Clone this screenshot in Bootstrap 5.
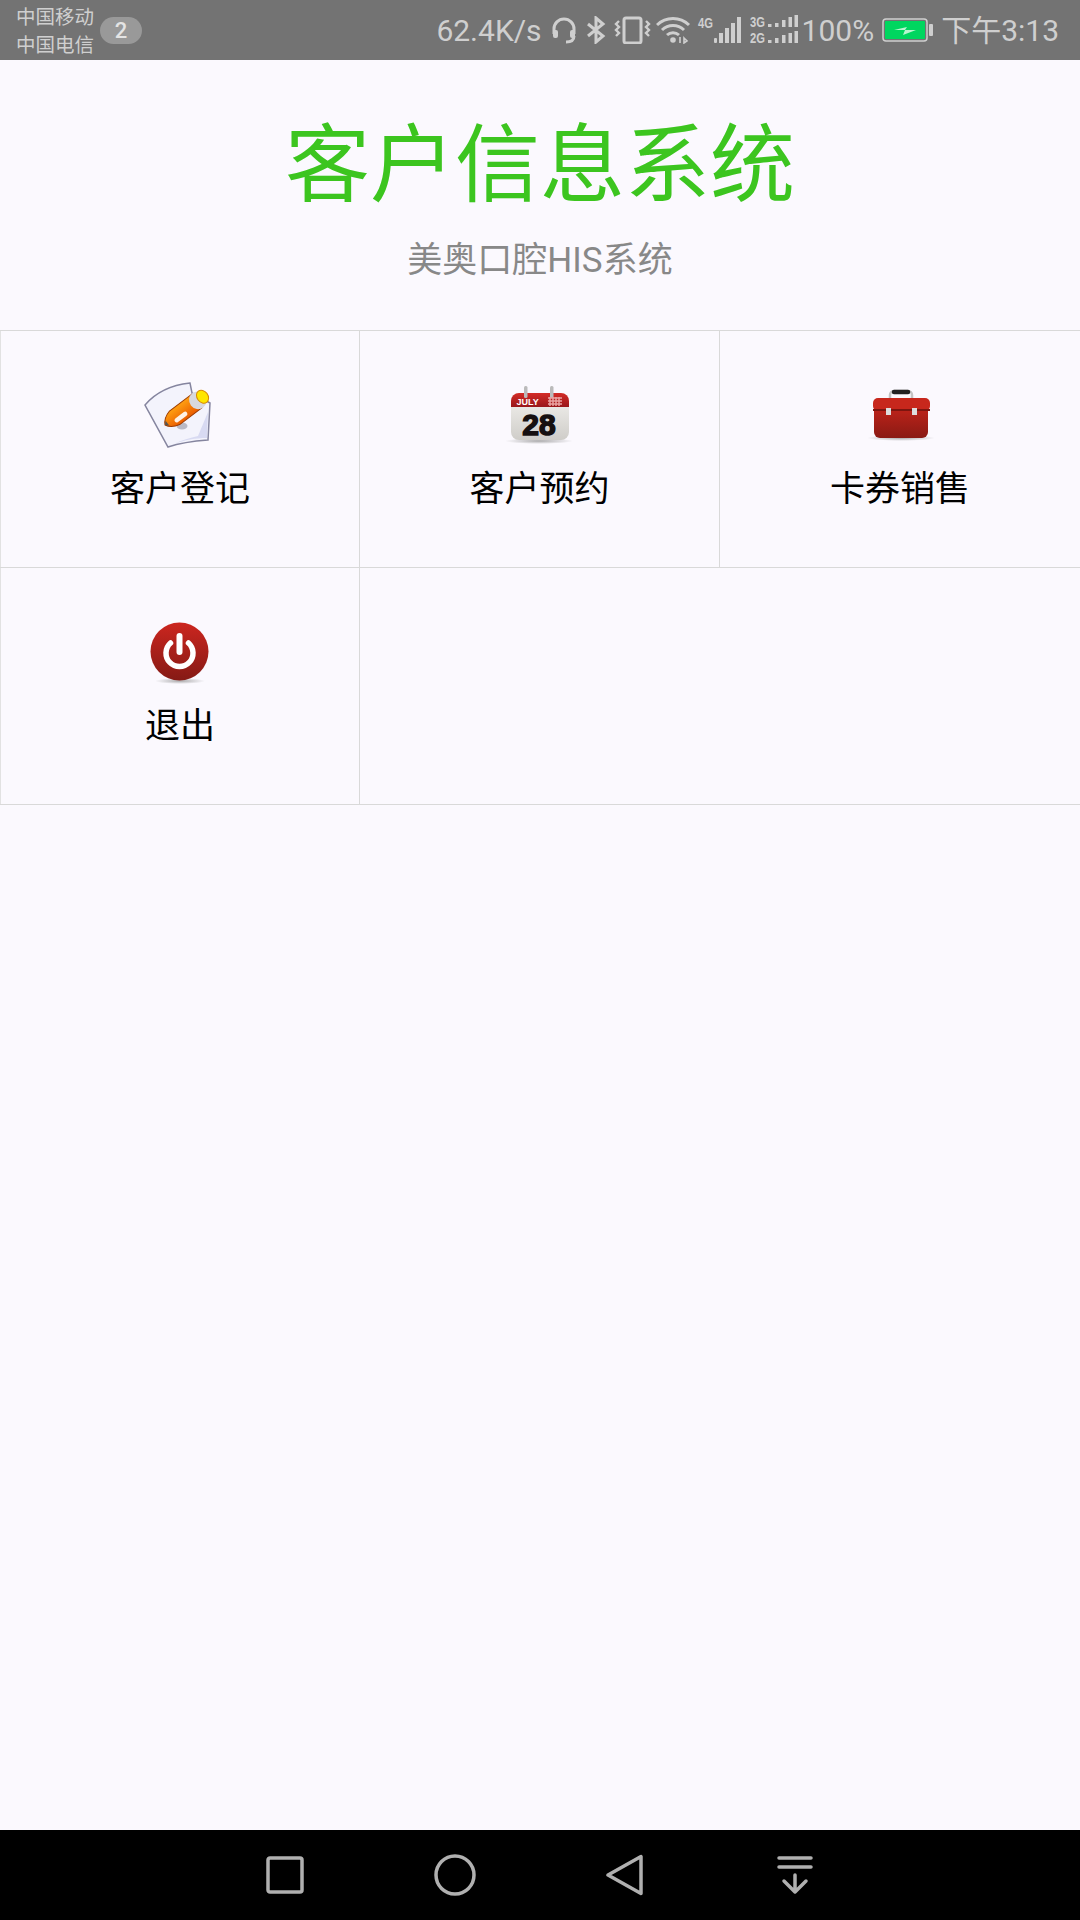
<!DOCTYPE html>
<html lang="zh-CN">
<head>
    <meta charset="UTF-8">
    <meta name="viewport" content="width=device-width, initial-scale=1.0">
    <title>客户信息系统</title>
    <link href="https://cdn.jsdelivr.net/npm/bootstrap@5.3.0/dist/css/bootstrap.min.css" rel="stylesheet">
    <style>
        body { background: #fbf9fe; font-family: Roboto, "Noto Sans CJK SC", sans-serif; }
        .app-screen { height: 1920px; }
        .status-strip { height: 60px; background: #737373; color: #cfcfcf; }
        .carrier-names { margin-left: 16px; padding-top: 4px; font-size: 19.5px; line-height: 28px; width: 80px; }
        .sim-count { margin-left: 4px; margin-top: 1px; width: 42px; height: 27px; border-radius: 14px; background: #999; color: #e4e4e4; font-size: 22px; font-weight: 500; line-height: 27px; }
        .status-right { padding-right: 21px; font-size: 30px; }
        .status-right svg { display: block; flex: none; }
        .page-head { height: 270px; padding-top: 40px; }
        .page-title { color: #3cc51f; font-size: 85px; font-weight: 400; line-height: 132px; margin: 0; }
        .page-sub { color: #888; font-size: 35px; line-height: 50px; margin: 4px 0 0; }
        .menu-grid { border-top: 1px solid #d9d9d9; border-bottom: 1px solid #d9d9d9; }
        .menu-cell { height: 236px; padding-top: 49px; border-left: 1px solid #e2e2e2; border-right: 1px solid #d9d9d9; color: #000; font-size: 35px; line-height: 48px; text-decoration: none; }
        .menu-row + .menu-row { border-top: 1px solid #d9d9d9; }
        .menu-cell svg { display: block; margin: 0 auto 14px; }
        .menu-cell + .menu-cell { border-left: 0; }
        .menu-cell + .menu-cell + .menu-cell { border-right: 0; }
        .nav-strip { height: 90px; background: #000; }
        .nav-slot { width: 170px; }
    </style>
</head>
<body>
<div class="app-screen d-flex flex-column">
    <!-- status bar -->
    <div class="status-strip d-flex align-items-center">
        <div class="carrier-names"><div>中国移动</div><div>中国电信</div></div>
        <div class="sim-count text-center">2</div>
        <div class="status-right ms-auto d-flex align-items-center">
            <span>62.4K/s</span>
            <svg class="ms-2" width="28" height="28" viewBox="0 0 28 28" fill="none" stroke="#cfcfcf" stroke-width="3"><path d="M4 18V13a10 10 0 0 1 20 0v5"/><rect x="3" y="14" width="5" height="8" rx="2" fill="#cfcfcf" stroke="none"/><rect x="20" y="14" width="5" height="8" rx="2" fill="#cfcfcf" stroke="none"/><path d="M24 20c0 4-3 6-8 6"/></svg>
            <svg class="ms-2" width="20" height="28" viewBox="0 0 20 28" fill="none" stroke="#cfcfcf" stroke-width="3"><path d="M2 8l15 12-7 6V2l7 6L2 20"/></svg>
            <svg class="ms-2" width="38" height="28" viewBox="0 0 38 28" fill="none" stroke="#cfcfcf" stroke-width="3"><rect x="10" y="2" width="17" height="25" rx="2"/><path d="M5 5l-3 3 3 3-3 3 3 3-3 3M32 5l3 3-3 3 3 3-3 3 3 3" stroke-width="2.4"/></svg>
            <svg class="ms-1" width="36" height="28" viewBox="0 0 36 28" fill="none" stroke="#cfcfcf" stroke-width="3"><path d="M1 9a23 23 0 0 1 32 0M6 14a16 16 0 0 1 22 0M11 19a9 9 0 0 1 12 0"/><circle cx="17" cy="24" r="2.8" fill="#cfcfcf" stroke="none"/><path d="M24 21v6M28 22l3 3-3 2z" stroke-width="1.6"/></svg>
            <svg class="ms-1" width="46" height="32" viewBox="0 -2 46 32"><text x="2" y="12" textLength="15" lengthAdjust="spacingAndGlyphs" font-family="'Liberation Sans',sans-serif" font-size="15" font-weight="700" fill="#cfcfcf">4G</text><g fill="#cfcfcf"><rect x="18" y="22" width="3" height="5" rx="1"/><rect x="23" y="17" width="4" height="10"/><rect x="29" y="12" width="4" height="15"/><rect x="35" y="7" width="4" height="20"/><rect x="41" y="1" width="4" height="26"/></g></svg>
            <svg class="ms-2" width="48" height="34" viewBox="0 -2 48 34"><g font-family="'Liberation Sans',sans-serif" font-size="15" font-weight="700" fill="#cfcfcf"><text x="0" y="12" textLength="15" lengthAdjust="spacingAndGlyphs">3G</text><text x="0" y="28" textLength="15" lengthAdjust="spacingAndGlyphs">2G</text></g><g fill="#cfcfcf"><rect x="18" y="9" width="3.5" height="3"/><rect x="25" y="8" width="3.5" height="4"/><rect x="32" y="5" width="3.5" height="7"/><rect x="38.5" y="2" width="3.5" height="10"/><rect x="44.5" y="0" width="3.5" height="12"/><rect x="18" y="25" width="3.5" height="3"/><rect x="25" y="23" width="3.5" height="5"/><rect x="32" y="20" width="3.5" height="8"/><rect x="38.5" y="18" width="3.5" height="10"/><rect x="44.5" y="16" width="3.5" height="12"/></g></svg>
            <span class="ms-1">100%</span>
            <svg class="ms-2" width="51" height="24" viewBox="0 0 51 24"><rect x="1" y="1" width="44" height="22" rx="3" fill="none" stroke="#cfcfcf" stroke-width="1.5"/><rect x="3" y="3" width="40" height="18" rx="1" fill="#00d65f"/><rect x="47" y="6" width="4" height="12" rx="1" fill="#cfcfcf"/><path d="M12 12l13-3-2 3h11l-13 5 2-5z" fill="#b9f5d0"/></svg>
            <span class="ms-2">下午3:13</span>
        </div>
    </div>

    <!-- header -->
    <div class="page-head text-center">
        <h1 class="page-title">客户信息系统</h1>
        <p class="page-sub">美奥口腔HIS系统</p>
    </div>

    <!-- menu -->
    <div class="menu-grid">
        <div class="menu-row row g-0">
            <a class="menu-cell col-4 text-center" href="#">
                <svg width="72" height="72" viewBox="0 0 72 72">
                    <defs>
                        <linearGradient id="penBody" x1="0" y1="0" x2="0" y2="1"><stop offset="0" stop-color="#ffa012"/><stop offset="1" stop-color="#ea5c00"/></linearGradient>
                        <linearGradient id="calBody" x1="0" y1="0" x2="0" y2="1"><stop offset="0" stop-color="#f4f3f0"/><stop offset="1" stop-color="#cfcdc9"/></linearGradient>
                        <linearGradient id="redTop" x1="0" y1="0" x2="0" y2="1"><stop offset="0" stop-color="#d42c27"/><stop offset="1" stop-color="#98171a"/></linearGradient>
                        <radialGradient id="floorShade"><stop offset="0" stop-color="#888" stop-opacity=".7"/><stop offset="1" stop-color="#888" stop-opacity="0"/></radialGradient>
                    </defs>
                    <path d="M1 25C12 12 28 5 46 3l2 10 18 10-2 37c-14 1-28 3-40 7z" fill="#f3f3fc" stroke="#85859f" stroke-width="1.5"/>
                    <path d="M30 64c10-4 22-6 33-6l1-26-10 24c-8 2-16 4-24 8z" fill="#d8daf2"/>
                    <ellipse cx="38" cy="46" rx="5.5" ry="3.5" fill="#b9b9c6"/>
                    <g transform="translate(21 45) rotate(-37)">
                        <path d="M0 0C2-4 6-7 12-8.5L40-8.5V8.5H12C6 7 2 4 0 0z" fill="url(#penBody)" stroke="#9c3a00" stroke-width="1"/>
                        <path d="M0 0L3-3V3z" fill="#555"/>
                        <rect x="10" y="1" width="15" height="4.5" rx="2.2" fill="#fff" opacity=".9"/>
                        <ellipse cx="41" cy="0" rx="8.5" ry="9" fill="#d8d8de"/>
                        <ellipse cx="47" cy="0" rx="5.5" ry="7" fill="#ffe600" stroke="#d98b00" stroke-width="1"/>
                    </g>
                </svg>
                客户登记
            </a>
            <a class="menu-cell col-4 text-center" href="#">
                <svg width="72" height="72" viewBox="0 0 72 72">
                    <ellipse cx="35" cy="61" rx="34" ry="3" fill="url(#floorShade)"/>
                    <rect x="7" y="13" width="58" height="47" rx="8" fill="url(#calBody)"/>
                    <path d="M7 27v-6a8 8 0 0 1 8-8h42a8 8 0 0 1 8 8v6z" fill="url(#redTop)"/>
                    <rect x="20" y="6" width="3.5" height="12" rx="1.5" fill="#bbb"/>
                    <rect x="46" y="6" width="3.5" height="12" rx="1.5" fill="#bbb"/>
                    <path d="M44 18h14M44 21h14M44 24h14M46 17v9M49 17v9M52 17v9M55 17v9" stroke="#e9a3a1" stroke-width="1.5"/>
                    <text x="12.5" y="25" font-family="'Liberation Sans',sans-serif" font-size="9" font-weight="700" fill="#fff">JULY</text>
                    <text x="35" y="55" text-anchor="middle" font-family="'Liberation Sans',sans-serif" font-size="30" font-weight="700" fill="#161010" stroke="#161010" stroke-width="1.5">28</text>
                </svg>
                客户预约
            </a>
            <a class="menu-cell col-4 text-center" href="#">
                <svg width="72" height="72" viewBox="0 0 72 72">
                    <defs>
                        <linearGradient id="boxRed" x1="0" y1="0" x2="0" y2="1"><stop offset="0" stop-color="#c8251b"/><stop offset="1" stop-color="#8a1a14"/></linearGradient>
                    </defs>
                    <ellipse cx="37" cy="58" rx="34" ry="3" fill="url(#floorShade)"/>
                    <path d="M26 19v-4a4 4 0 0 1 4-4h14a4 4 0 0 1 4 4v4" fill="none" stroke="#c4c4c4" stroke-width="2.5"/>
                    <path d="M30 12h14" stroke="#222" stroke-width="4.5" stroke-linecap="round"/>
                    <rect x="10" y="22" width="54" height="36" rx="6" fill="url(#boxRed)"/>
                    <rect x="9" y="18" width="57" height="13" rx="5" fill="#c7271c"/>
                    <rect x="9" y="29" width="57" height="2" fill="#7c150f"/>
                    <rect x="22" y="28" width="5" height="7" fill="#ddd"/>
                    <rect x="48" y="28" width="5" height="7" fill="#ddd"/>
                </svg>
                卡券销售
            </a>
        </div>
        <div class="menu-row row g-0">
            <a class="menu-cell col-4 text-center" href="#">
                <svg width="72" height="72" viewBox="0 0 72 72">
                    <defs>
                        <linearGradient id="powerRed" x1="0" y1="0" x2="0" y2="1"><stop offset="0" stop-color="#cc261f"/><stop offset="1" stop-color="#851a15"/></linearGradient>
                    </defs>
                    <ellipse cx="36" cy="64" rx="25" ry="3" fill="url(#floorShade)"/>
                    <circle cx="35.5" cy="34.5" r="29" fill="url(#powerRed)"/>
                    <path d="M26.5 26a13.5 13.5 0 1 0 18 0" fill="none" stroke="#fff" stroke-width="5.5" stroke-linecap="round"/>
                    <path d="M35.5 19v16" stroke="#fff" stroke-width="6" stroke-linecap="round"/>
                </svg>
                退出
            </a>
        </div>
    </div>

    <div class="flex-grow-1"></div>

    <!-- nav bar -->
    <div class="nav-strip d-flex justify-content-center align-items-center">
        <div class="nav-slot d-flex justify-content-center">
            <svg width="38" height="38" viewBox="0 0 38 38"><rect x="2" y="2" width="34" height="34" rx="2" fill="none" stroke="#b0b0b0" stroke-width="3.5"/></svg>
        </div>
        <div class="nav-slot d-flex justify-content-center">
            <svg width="42" height="42" viewBox="0 0 42 42"><circle cx="21" cy="21" r="19" fill="none" stroke="#b0b0b0" stroke-width="3.5"/></svg>
        </div>
        <div class="nav-slot d-flex justify-content-center">
            <svg width="38" height="42" viewBox="0 0 38 42"><path d="M2 21L35 2.5v37z" fill="none" stroke="#b0b0b0" stroke-width="3.5" stroke-linejoin="round"/></svg>
        </div>
        <div class="nav-slot d-flex justify-content-center">
            <svg width="36" height="40" viewBox="0 0 36 40" fill="none" stroke="#b0b0b0" stroke-width="3.5" stroke-linecap="round" stroke-linejoin="round"><path d="M2 3h32M2 12h32M18 20v17M7 26l11 11 11-11"/></svg>
        </div>
    </div>
</div>
<script src="https://cdn.jsdelivr.net/npm/bootstrap@5.3.0/dist/js/bootstrap.bundle.min.js"></script>
</body>
</html>
